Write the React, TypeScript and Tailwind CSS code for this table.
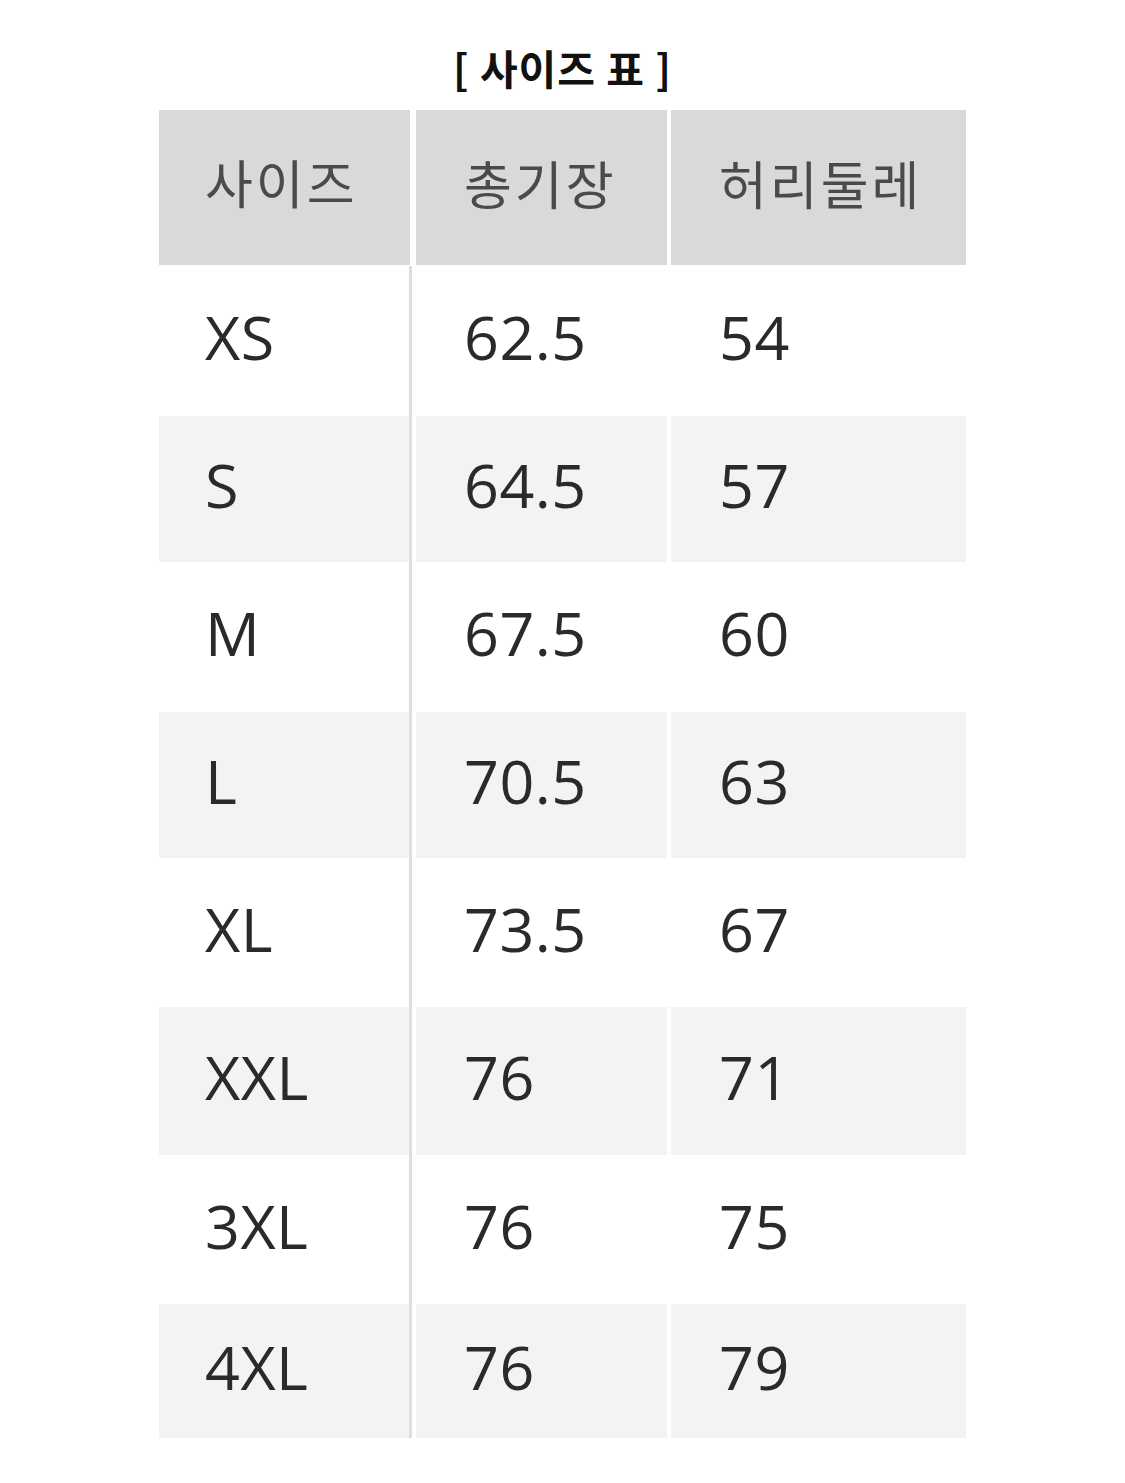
const rows = [
  ["XS", "62.5", "54"],
  ["S", "64.5", "57"],
  ["M", "67.5", "60"],
  ["L", "70.5", "63"],
  ["XL", "73.5", "67"],
  ["XXL", "76", "71"],
  ["3XL", "76", "75"],
  ["4XL", "76", "79"],
];

const heights = ["h-[150px]", "h-[146px]", "h-[150px]", "h-[146px]", "h-[149px]", "h-[148px]", "h-[149px]", "h-[134px]"];

const krFont = { fontFamily: '"Noto Sans CJK KR", "Noto Sans", sans-serif' };
const numFont = { fontFamily: '"Open Sans", "Noto Sans CJK KR", sans-serif' };

const SizeRow = ({ row, index }: any) => {
  const bg = index % 2 === 1 ? "bg-[#f3f3f3]" : "bg-white";
  return (
    <div className={`flex ${heights[index]}`}>
      <div className={`w-[250px] ${bg} flex items-center pl-[46px] pb-[8px]`}>
        {row[0]}
      </div>
      <div className="w-[3px] bg-[#dedede]" />
      <div className={`w-[251px] ml-[4px] ${bg} flex items-center pl-[48px] pb-[8px]`}>
        {row[1]}
      </div>
      <div className={`w-[295px] ml-[4px] ${bg} flex items-center pl-[48px] pb-[8px]`}>
        {row[2]}
      </div>
    </div>
  );
};

export default function App() {
  return (
    <div className="w-[1125px] h-[1483px] bg-white">
      <h1
        className="pt-[38px] text-center text-[41px] font-bold text-[#111] leading-[58px] tracking-[1px]"
        style={krFont}
      >
        [ 사이즈 표 ]
      </h1>
      <div className="w-[807px] mx-auto mt-[14px]">
        <div className="flex h-[155px] text-[52px] tracking-[3px] text-[#4a4a4a]" style={krFont}>
          <div className="w-[251px] bg-[#d9d9d9] flex items-center pl-[46px] pb-[12px]">사이즈</div>
          <div className="w-[251px] ml-[6px] bg-[#d9d9d9] flex items-center pl-[48px] pb-[10px]">총기장</div>
          <div className="w-[295px] ml-[4px] bg-[#d9d9d9] flex items-center pl-[48px] pb-[10px]">허리둘레</div>
        </div>
        <div className="pt-[1px] text-[61px] text-[#2a2a2a] tracking-[0.5px]" style={numFont}>
          {rows.map((row, i) => (
            <SizeRow row={row} index={i} key={row[0]} />
          ))}
        </div>
      </div>
    </div>
  );
}
